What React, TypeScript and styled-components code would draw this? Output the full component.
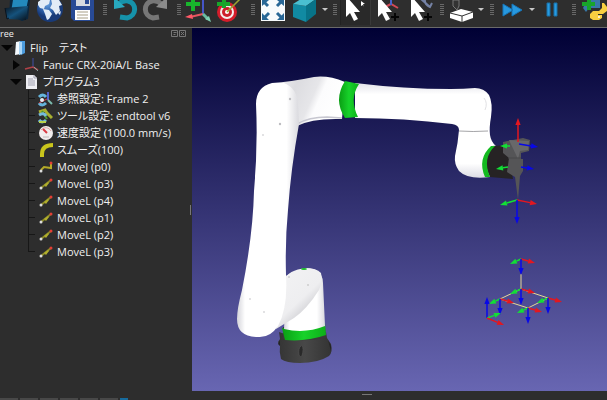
import React from "react";
import styled, { createGlobalStyle } from "styled-components";

const GlobalStyle = createGlobalStyle`
  * { box-sizing: border-box; }
  body { margin: 0; background: #2d2d2d; color: #f0f0f0; font-family: "Open Sans", "Noto Sans CJK JP", sans-serif; }
  button { border: 0; padding: 0; background: none; color: inherit; font: inherit; }
`;

const Window = styled.div`
  display: grid;
  grid-template-rows: 28px 1fr 9px;
  height: 100vh;
  overflow: hidden;
`;

const Toolbar = styled.header`
  display: flex;
  overflow: hidden;
  background: #2e2e2e;
  border-bottom: 1px solid #6a6a6a;
`;

const ToolButton = styled.button<{ $width: number; $active?: boolean }>`
  flex: 0 0 ${(p) => p.$width}px;
  height: 27px;
  display: flex;
  background: ${(p) => (p.$active ? "#292929" : "none")};
  box-shadow: ${(p) => (p.$active ? "inset 0 -2px 0 #2e2e2e, inset 1px 0 0 #222, inset -1px 0 0 #3a3a3a" : "none")};
  svg { display: block; }
`;

const Grip = styled.span<{ $width: number }>`
  flex: 0 0 ${(p) => p.$width}px;
  display: flex;
  justify-content: center;
  &::before {
    content: "";
    width: 4px;
    height: 11px;
    margin-top: 4px;
    background: repeating-linear-gradient(180deg, #686868 0 1px, transparent 1px 2px);
  }
`;

const Caret = styled.button<{ $width: number }>`
  flex: 0 0 ${(p) => p.$width}px;
  display: flex;
  justify-content: center;
  &::before {
    content: "";
    margin-top: 8px;
    border: 3px solid transparent;
    border-top-color: #c8c8c8;
  }
`;

const Workspace = styled.main`
  display: grid;
  grid-template-columns: 189px 3px 1fr;
  min-height: 0;
`;

const Dock = styled.aside`
  min-width: 0;
`;

const DockTitle = styled.div`
  display: flex;
  justify-content: space-between;
  height: 11px;
  padding: 0 3px 0 0;
  font-size: 9px;
  line-height: 12px;
`;

const DockButtons = styled.div`
  display: flex;
  gap: 1px;
  align-items: center;
`;

const DockButton = styled.button`
  width: 7px;
  height: 7px;
  display: flex;
`;

const Tree = styled.ul`
  list-style: none;
  margin: 0;
  padding: 0;
`;

const Branch = styled(Tree)`
  margin-left: 28px;
  background: linear-gradient(#171717, #171717) 0 0 / 1px calc(100% - 8px) no-repeat;
`;

const Row = styled.div<{ $indent: number }>`
  display: flex;
  align-items: center;
  height: 17px;
  padding-left: ${(p) => p.$indent}px;
  font-size: 11px;
  line-height: 17px;
  white-space: nowrap;
  svg { flex: none; display: block; }
`;

const Leaf = styled(Row)`
  background: linear-gradient(#171717, #171717) 0 8px / 7px 1px no-repeat;
`;

const Label = styled.span`
  margin-left: 4px;
  font-feature-settings: "palt";
`;

const Expander = styled.button<{ $open?: boolean }>`
  width: 14px;
  height: 17px;
  display: flex;
  align-items: center;
  justify-content: center;
  &::before {
    content: "";
    border-style: solid;
    border-color: ${(p) => (p.$open ? "#050505 transparent transparent" : "transparent transparent transparent #050505")};
    border-width: ${(p) => (p.$open ? "6px 6px 0" : "5px 0 5px 7px")};
  }
`;

const Splitter = styled.div`
  display: flex;
  align-items: center;
  justify-content: center;
  &::before {
    content: "";
    width: 1px;
    height: 10px;
    background: #777;
  }
`;

const Viewport = styled.section`
  min-width: 0;
  min-height: 0;
  overflow: hidden;
  background: linear-gradient(#000034, #6866b2);
  svg { display: block; width: 100%; height: 100%; }
`;

const Footer = styled.footer`
  display: grid;
  grid-template-columns: 192px 1fr;
  align-items: start;
`;

const FooterTabs = styled.div`
  display: flex;
  gap: 2px;
  margin-top: 7px;
`;

const FooterTab = styled.span<{ $accent?: boolean }>`
  width: ${(p) => (p.$accent ? 8 : 18)}px;
  height: 2px;
  background: ${(p) => (p.$accent ? "#176b9d" : "#484848")};
`;

const FooterGrip = styled.span`
  justify-self: center;
  width: 10px;
  height: 1px;
  margin-top: 3px;
  margin-right: 66px;
  background: #777;
`;

const Pointer = ({ x }: { x: number }) => (
  <path d={`M${x} -4V17l4-4 4 8 4-2-4-7h6L${x + 1} -3z`} fill="#fff" />
);
const Plus = ({ x, y }: { x: number; y: number }) => (
  <path d={`M${x - 4} ${y}h8M${x} ${y - 4}v8`} stroke="#050505" strokeWidth="2" />
);

type Tool = { kind: "tool" | "grip" | "caret"; w: number; label?: string; art?: React.ReactNode; active?: boolean };

const tools: Tool[] = [
  { kind: "tool", w: 34, label: "Open", art: (
    <>
      <defs><linearGradient id="folder" x2="1" y2="1"><stop stopColor="#0a121c" /><stop offset=".5" stopColor="#15527c" /><stop offset="1" stopColor="#08111a" /></linearGradient></defs>
      <path d="M10 0h20l-2 19-6 2L9 15z" fill="#0a2740" /><path d="M13 0h15l-2 10-15 2z" fill="#2389bd" />
      <path d="M5 8l23-2-2 14-19-1z" fill="url(#folder)" /><path d="M5 8l2 11 2-1" stroke="#09131d" fill="none" />
    </>) },
  { kind: "tool", w: 32, label: "Online library", art: (
    <>
      <defs><radialGradient id="globe" cx=".4" cy=".3"><stop stopColor="#6aa2df" /><stop offset=".6" stopColor="#2f63ad" /><stop offset="1" stopColor="#183a78" /></radialGradient></defs>
      <circle cx="16" cy="9" r="13" fill="url(#globe)" />
      <path d="M4 2l4-3 8 1-1 4-4 2-1 3-4-1-2-3zM9 9l6 1 3 4-3 5-2 1-2-6zM17-1l8 1 3 5-3 1 1 5-4 4-3-5-3-2 2-4zM24 13l3-2-1 4z" fill="#e2ecf7" />
    </>) },
  { kind: "tool", w: 34, label: "Save", art: (
    <>
      <path d="M5 0h23v21H8l-3-3z" fill="#284a95" /><path d="M10 0h14v6H10z" fill="#d5d9df" /><path d="M19 0h4v4h-4z" fill="#284a95" />
      <path d="M9 10h15v10H9z" fill="#fff" /><path d="M11 12h11M11 15h11M11 18h11" stroke="#a89f86" />
    </>) },
  { kind: "grip", w: 10 },
  { kind: "tool", w: 31, label: "Undo", art: (
    <><path d="M8 5q4-5 10-4c9 2 9 15-1 17l-7-1" fill="none" stroke="#1692a9" strokeWidth="5" /><path d="M4-3v12l11-2z" fill="#28a8bd" /></>) },
  { kind: "tool", w: 33, label: "Redo", art: (
    <><path d="M21 5q-4-5-10-4c-9 2-9 15 1 17l6-1" fill="none" stroke="#777" strokeWidth="5" /><path d="M26-3v12L15 7z" fill="#8b8b8b" /></>) },
  { kind: "grip", w: 10 },
  { kind: "tool", w: 29, label: "Add reference frame", art: (
    <><path d="M19 14V-2" stroke="#4555c7" strokeWidth="2" /><path d="M19 14L6 17" stroke="#e65660" strokeWidth="2" /><path d="M1 17l7-3 1 5z" fill="#ff5966" /><path d="M19 14l5 5" stroke="#68bba2" strokeWidth="3" /><path d="M27 22l-6-3 4-3z" fill="#7fd0b3" /><path d="M9-2V11M2 4h14" stroke="#18b52c" strokeWidth="4" /></>) },
  { kind: "tool", w: 33, label: "Add target", art: (
    <><circle cx="14" cy="12" r="10" fill="#d51d2b" /><circle cx="14" cy="12" r="7" fill="#f4eeee" /><circle cx="14" cy="12" r="5" fill="#cd202b" /><circle cx="14" cy="12" r="2" fill="#fff" /><path d="M14 12L28-2" stroke="#9aa332" strokeWidth="1.5" /><path d="M11-2V8M4 4h13" stroke="#18a52a" strokeWidth="4" /></>) },
  { kind: "grip", w: 14 },
  { kind: "tool", w: 28, label: "Fit all", art: (
    <><path d="M1 0h24v21H1z" fill="#f7fafc" /><path d="M2 20v-7l7 7zM24 20v-7l-7 7zM2 0h7L2 6zM24 0h-7l7 6z" fill="#286796" /><path d="M9 13l-4 4M17 13l4 4M8 6L4 2M17 6l4-4" stroke="#286796" strokeWidth="3" /></>) },
  { kind: "tool", w: 32, label: "View", art: (
    <><path d="M5 4l13 2v16L5 17z" fill="#118aa2" /><path d="M5 4l8-5h15l-10 7z" fill="#49bfd0" /><path d="M18 6l10-7v15l-10 8z" fill="#087388" /></>) },
  { kind: "caret", w: 10 },
  { kind: "grip", w: 10 },
  { kind: "tool", w: 31, label: "Select", active: true, art: <><Pointer x={6} /><path d="M21 1v5l2-1 1 2-1-3h2z" fill="#fff" /></> },
  { kind: "tool", w: 33, label: "Move frame", art: <><path d="M12 8L20 4 27 8" stroke="#d34956" fill="none" strokeWidth="2" /><path d="M20 5V-1" stroke="#4963cd" strokeWidth="2" /><Pointer x={7} /><Plus x={24} y={17} /></> },
  { kind: "tool", w: 32, label: "Move tool", art: <><path d="M17-1l9 8M21-1q-1 5 5 8l2-4" stroke="#7582a5" fill="none" strokeWidth="2" /><Pointer x={7} /><Plus x={24} y={17} /></> },
  { kind: "grip", w: 12 },
  { kind: "tool", w: 28, label: "Collision check", art: (
    <><path d="M5 0h6v6l-2 4-4-4z" fill="#333" stroke="#777" /><path d="M2 13l11-4 12 3v6l-11 4-12-4z" fill="#fff" /><path d="M2 13l12 3 11-4M14 16v6" fill="none" stroke="#333" /></>) },
  { kind: "caret", w: 10 },
  { kind: "grip", w: 12 },
  { kind: "tool", w: 28, label: "Fast simulation", art: <><path d="M5 4v12l10-6zM14 4v12l10-6z" fill="#2798df" stroke="#1674b7" /></> },
  { kind: "caret", w: 12 },
  { kind: "tool", w: 30, label: "Pause", art: <path d="M9 3h3v13H9zM16 3h3v13h-3z" fill="#279be2" stroke="#1871a8" /> },
  { kind: "grip", w: 12 },
  { kind: "tool", w: 27, label: "Add Python program", art: (
    <><path d="M9 0h11v8H9l-3 4-3-4 2-4z" fill="#3978a8" /><path d="M10 18v-4l3-3h6l3-3V3h2l3 4v4l-4 3h-5v1h4v3l-3 2h-6z" fill="#f8cf41" /><path d="M9-2V10M2 4h13" stroke="#18a52a" strokeWidth="4" /><circle cx="19" cy="17" r="1" fill="#fff" /></>) },
];

const FileIcon = () => (
  <svg width="12" height="16" viewBox="0 0 12 16"><path d="M2 2l5-1v13l-6 1z" fill="#f5fbff" /><path d="M6 1h5v12l-4 2z" fill="#4b9bdc" /><path d="M5 2l3 0v12l-3 1z" fill="#a9d5f6" /></svg>
);
const FrameIcon = () => (
  <svg width="16" height="16" viewBox="0 0 16 16"><path d="M10 10V1" stroke="#4150a8" /><path d="M10 10L2 12M10 10l5 3" stroke="#b04248" strokeWidth="1.500" fill="none" /><path d="M11 10l4 4" stroke="#87a4a0" /></svg>
);
const ProgramIcon = () => (
  <svg width="16" height="16" viewBox="-2 0 16 16"><path d="M1 1h8l3 3v11H1z" fill="#eeeef2" /><path d="M9 1v3h3M3 5h5M3 7h7M3 9h7M3 11h7" stroke="#a1a1b0" fill="none" /></svg>
);
const SetFrameIcon = () => (
  <svg width="16" height="16" viewBox="0 0 16 16"><path d="M11 9V1" stroke="#5264cc" strokeWidth="2" /><path d="M11 9l4 4" stroke="#7cbbae" strokeWidth="2" /><path d="M2 6q4-4 7 0M9 12q-4 4-7 0" fill="none" stroke="#66b5dc" strokeWidth="3" /><path d="M2 12l8-4" stroke="#d83e4a" strokeWidth="1" /><circle cx="5" cy="9" r="2" fill="#e5edf2" /></svg>
);
const SetToolIcon = () => (
  <svg width="16" height="16" viewBox="0 0 16 16"><path d="M2 4l6-2 2 3 5 5" fill="none" stroke="#a7af31" strokeWidth="3" /><path d="M5 3l5 8" stroke="#4a972e" strokeWidth="2" /><path d="M2 7q5-3 7 1M9 12q-4 4-7 0" fill="none" stroke="#76bcda" strokeWidth="3" /><path d="M2 14h7" stroke="#b8d34d" strokeWidth="2" /></svg>
);
const SpeedIcon = () => (
  <svg width="16" height="16" viewBox="0 0 16 16"><circle cx="9" cy="8" r="7" fill="#f2eded" /><path d="M4 5a6 6 0 0 1 10 1" fill="none" stroke="#d9a5a5" strokeWidth="1" /><path d="M6 4l4 4" stroke="#da3a42" strokeWidth="2" /><path d="M6 12h6" stroke="#c0b8b8" /></svg>
);
const SmoothIcon = () => (
  <svg width="16" height="16" viewBox="0 0 16 16"><path d="M5 15V12Q5 3 16 3" fill="none" stroke="#c9c51c" strokeWidth="4" /></svg>
);
const MoveIcon = ({ joint }: { joint?: boolean }) => (
  <svg width="16" height="16" viewBox="0 0 16 16">
    <path d={joint ? "M4 11l3-3 7 1V4" : "M4 12L14 4"} fill="none" stroke={joint ? "#b5aa27" : "#8c8b28"} strokeWidth="2" />
    {!joint && <path d="M7 9l4-3 1 1-3 4z" fill="#b2af2c" />}
    <circle cx="4" cy="12" r="1.500" fill="#ddd" /><circle cx="14" cy="4" r="1.500" fill="#e23e35" />
  </svg>
);

const steps: [React.ReactNode, string][] = [
  [<SetFrameIcon />, "参照設定: Frame 2"],
  [<SetToolIcon />, "ツール設定: endtool v6"],
  [<SpeedIcon />, "速度設定 (100.0 mm/s)"],
  [<SmoothIcon />, "スムーズ(100)"],
  [<MoveIcon joint />, "MoveJ (p0)"],
  [<MoveIcon />, "MoveL (p3)"],
  [<MoveIcon />, "MoveL (p4)"],
  [<MoveIcon />, "MoveL (p1)"],
  [<MoveIcon />, "MoveL (p2)"],
  [<MoveIcon />, "MoveL (p3)"],
];

const RED = "#e3171f";
const GREEN = "#12df35";
const BLUE = "#0808e8";

const Arrow = ({ from, to, color }: { from: [number, number]; to: [number, number]; color: string }) => {
  const dx = to[0] - from[0];
  const dy = to[1] - from[1];
  const n = Math.hypot(dx, dy);
  const ux = dx / n;
  const uy = dy / n;
  const bx = to[0] - ux * 7;
  const by = to[1] - uy * 7;
  return (
    <g fill={color} stroke={color}>
      <line x1={from[0]} y1={from[1]} x2={bx} y2={by} strokeWidth="1.5" />
      <polygon stroke="none" points={`${to[0]},${to[1]} ${bx - uy * 2.6},${by + ux * 2.6} ${bx + uy * 2.6},${by - ux * 2.6}`} />
    </g>
  );
};

const Triad = ({ x, y }: { x: number; y: number }) => (
  <>
    <Arrow from={[x, y]} to={[x + 14, y + 4]} color={RED} />
    <Arrow from={[x, y]} to={[x - 11, y + 5]} color={GREEN} />
    <Arrow from={[x, y]} to={[x, y + 16]} color={BLUE} />
  </>
);

const RobotScene = () => (
  <svg viewBox="192 28 415 363" role="img" aria-label="Fanuc CRX-20iA/L">
    <defs>
      <linearGradient id="column"><stop stopColor="#d4d4da" /><stop offset=".13" stopColor="#fff" /><stop offset=".8" stopColor="#fff" /><stop offset="1" stopColor="#d9d9de" /></linearGradient>
      <linearGradient id="elbow" x1="0" x2="1" y1="0" y2=".3"><stop stopColor="#f4f4f6" /><stop offset=".35" stopColor="#dcdce0" /><stop offset=".62" stopColor="#e6e6e9" /><stop offset=".72" stopColor="#fcfcfd" /><stop offset="1" stopColor="#fff" /></linearGradient>
      <linearGradient id="forearm" x1="0" x2="0" y1="0" y2="1"><stop stopColor="#e4e4ea" /><stop offset=".12" stopColor="#fff" /><stop offset=".85" stopColor="#fff" /><stop offset="1" stopColor="#dcdce4" /></linearGradient>
      <linearGradient id="shoulder" x1="0" y1="0" x2=".7" y2="1"><stop stopColor="#f3f3f4" /><stop offset=".6" stopColor="#eeeef0" /><stop offset="1" stopColor="#b7b7bd" /></linearGradient>
      <linearGradient id="band"><stop stopColor="#0a9e14" /><stop offset=".5" stopColor="#17d22a" /><stop offset="1" stopColor="#0daf19" /></linearGradient>
      <linearGradient id="base"><stop stopColor="#343434" /><stop offset=".5" stopColor="#484848" /><stop offset="1" stopColor="#333" /></linearGradient>
    </defs>

    <path d="M279 332q24 9 47 0l1 6 4 6q2 8-2 12-11 7-29 7-14 0-19-4-2-7-1-13l-2-4 2-3z" fill="url(#base)" />
    <path d="M301 346q-3 2-2 9 1 3 3 1 2-8 0-10" fill="#292929" stroke="#555" strokeWidth=".6" /><path d="M328 340l3 6v5zM280 340l-2 4 2 2" fill="#242424" />
    <path d="M283 327h42l1 11q-20 4-43 1z" fill="#3a3a3a" />
    <path d="M282 328q24 4 43-5l1 12q-20 7-41 5z" fill="url(#band)" />
    <path d="M286 276q16-10 30-6 7 4 7 13l2 43q-20 8-41 3z" fill="url(#column)" />
    <path d="M284 280q4-10 22-12 10 0 15 5 2 8-2 17-12 19-25 28l-18 11z" fill="url(#shoulder)" />
    <ellipse cx="304" cy="269" rx="3" ry="1" fill="#1bbd2a" />
    <circle cx="308" cy="285" r=".7" fill="#aaa" /><circle cx="289" cy="277" r=".7" fill="#aaa" />

    <path d="M272 83Q290 82 314 77q14-2 31 5l-3 37q-30-1-45 7z" fill="url(#elbow)" />
    <path d="M297 124q12-7 30-7l15 1" fill="none" stroke="#c7c7d0" strokeWidth="1.500" />
    <path d="M256 104q0-17 16-21h12q13 5 14 21l1 20q-8 44-11 86-3 30-2 65 2 33-8 51-8 12-20 11-21 0-21-18 0-10 5-29 11-55 12-99 4-45 2-87" fill="url(#column)" />
    <g fill="#bdbdc1"><circle cx="290" cy="99" r="1.2" /><circle cx="280" cy="124" r="1.2" /><circle cx="263" cy="135" r=".8" /><circle cx="250" cy="299" r=".8" /><circle cx="264" cy="312" r=".8" /></g>

    <path d="M355 83q49 6 96 6 13 0 24-1 9 0 14 7 4 8 2 22-2 11-1 18 1 7 6 11l-6 31q-22 3-31-6-5-7-4-15 3-13 4-26 0-5-7-6-48-6-97-6z" fill="url(#forearm)" />
    <path d="M459 131q14 1 29 0" stroke="#8d8d91" strokeWidth=".8" fill="none" /><path d="M484 98q4 5 1 12" stroke="#e1e1e4" fill="none" />
    <path d="M345 81l14 3q-10 15-1 33l-13 1q-12-18 0-37" fill="url(#band)" />
    <path d="M492 146l15-1 6 34-23-2q-9-17 2-31" fill="#262324" />
    <path d="M491 146l4 0q-13 12-5 31l-5 0q-8-18 6-31" fill="#14ba20" />
    <path d="M503 142l20-4 7 2-1 11-8 2v6h2v12l-3 5-2 24-3-23-8-5 2-14-6-5z" fill="#555557" />
    <path d="M509 140l20 1-1 9-8 1-2 8" fill="#68686a" /><path d="M508 158h13" stroke="#48484a" />

    <Arrow from={[518, 142]} to={[518, 118]} color={RED} />
    <Arrow from={[510, 146]} to={[500, 146]} color={GREEN} />
    <Arrow from={[519, 144]} to={[538, 147]} color={BLUE} />
    <Arrow from={[508, 167]} to={[496, 169]} color={GREEN} />
    <Arrow from={[521, 167]} to={[534, 169]} color={BLUE} />
    <Arrow from={[517, 200]} to={[500, 205]} color={GREEN} />
    <Arrow from={[517, 200]} to={[537, 204]} color={RED} />
    <Arrow from={[517, 200]} to={[517, 224]} color={BLUE} />

    <path d="M521 274v15l-21 10 28 9 20-10-27-9" fill="none" stroke="#e3d795" strokeWidth="1" />
    <Triad x={521} y={259} />
    <Triad x={521} y={289} />
    <Triad x={548} y={298} />
    <Triad x={500} y={299} />
    <Triad x={528} y={308} />
    <Arrow from={[487, 318]} to={[487, 297]} color={BLUE} />
    <Arrow from={[487, 318]} to={[501, 313]} color={GREEN} />
    <Arrow from={[487, 318]} to={[504, 325]} color={RED} />
  </svg>
);

export default function App() {
  return (
    <Window>
      <GlobalStyle />
      <Toolbar>
        {tools.map((t, i) =>
          t.kind === "grip" ? <Grip key={i} $width={t.w} /> :
          t.kind === "caret" ? <Caret key={i} $width={t.w} aria-label="More options" /> : (
            <ToolButton key={i} $width={t.w} $active={t.active} aria-label={t.label}>
              <svg width={t.w} height="27" viewBox={`0 0 ${t.w} 27`}>{t.art}</svg>
            </ToolButton>
          )
        )}
      </Toolbar>
      <Workspace>
        <Dock>
          <DockTitle>
            <span>ree</span>
            <DockButtons>
              <DockButton aria-label="Float panel"><svg width="7" height="7" viewBox="0 0 7 7"><path d="M.5 .5h6v6h-6zM2.500 2.500h3M2.500 4.500h2" fill="none" stroke="#777" /></svg></DockButton>
              <DockButton aria-label="Close panel"><svg width="7" height="7" viewBox="0 0 7 7"><path d="M.5 .5h6v6h-6zM2 2l3 3M5 2L2 5" fill="none" stroke="#777" /></svg></DockButton>
            </DockButtons>
          </DockTitle>
          <Tree>
            <li>
              <Row $indent={0}><Expander $open aria-label="Collapse station" /><FileIcon /><Label>Flip　テスト</Label></Row>
              <Tree>
                <li><Row $indent={9}><Expander aria-label="Expand robot" /><FrameIcon /><Label>Fanuc CRX-20iA/L Base</Label></Row></li>
                <li>
                  <Row $indent={9}><Expander $open aria-label="Collapse program" /><ProgramIcon /><Label>プログラム3</Label></Row>
                  <Branch>
                    {steps.map(([icon, text], i) => (
                      <li key={i}><Leaf $indent={9}>{icon}<Label>{text}</Label></Leaf></li>
                    ))}
                  </Branch>
                </li>
              </Tree>
            </li>
          </Tree>
        </Dock>
        <Splitter />
        <Viewport><RobotScene /></Viewport>
      </Workspace>
      <Footer>
        <FooterTabs>
          {[0, 1, 2, 3, 4, 5].map((n) => <FooterTab key={n} />)}
          <FooterTab $accent />
        </FooterTabs>
        <FooterGrip />
      </Footer>
    </Window>
  );
}
